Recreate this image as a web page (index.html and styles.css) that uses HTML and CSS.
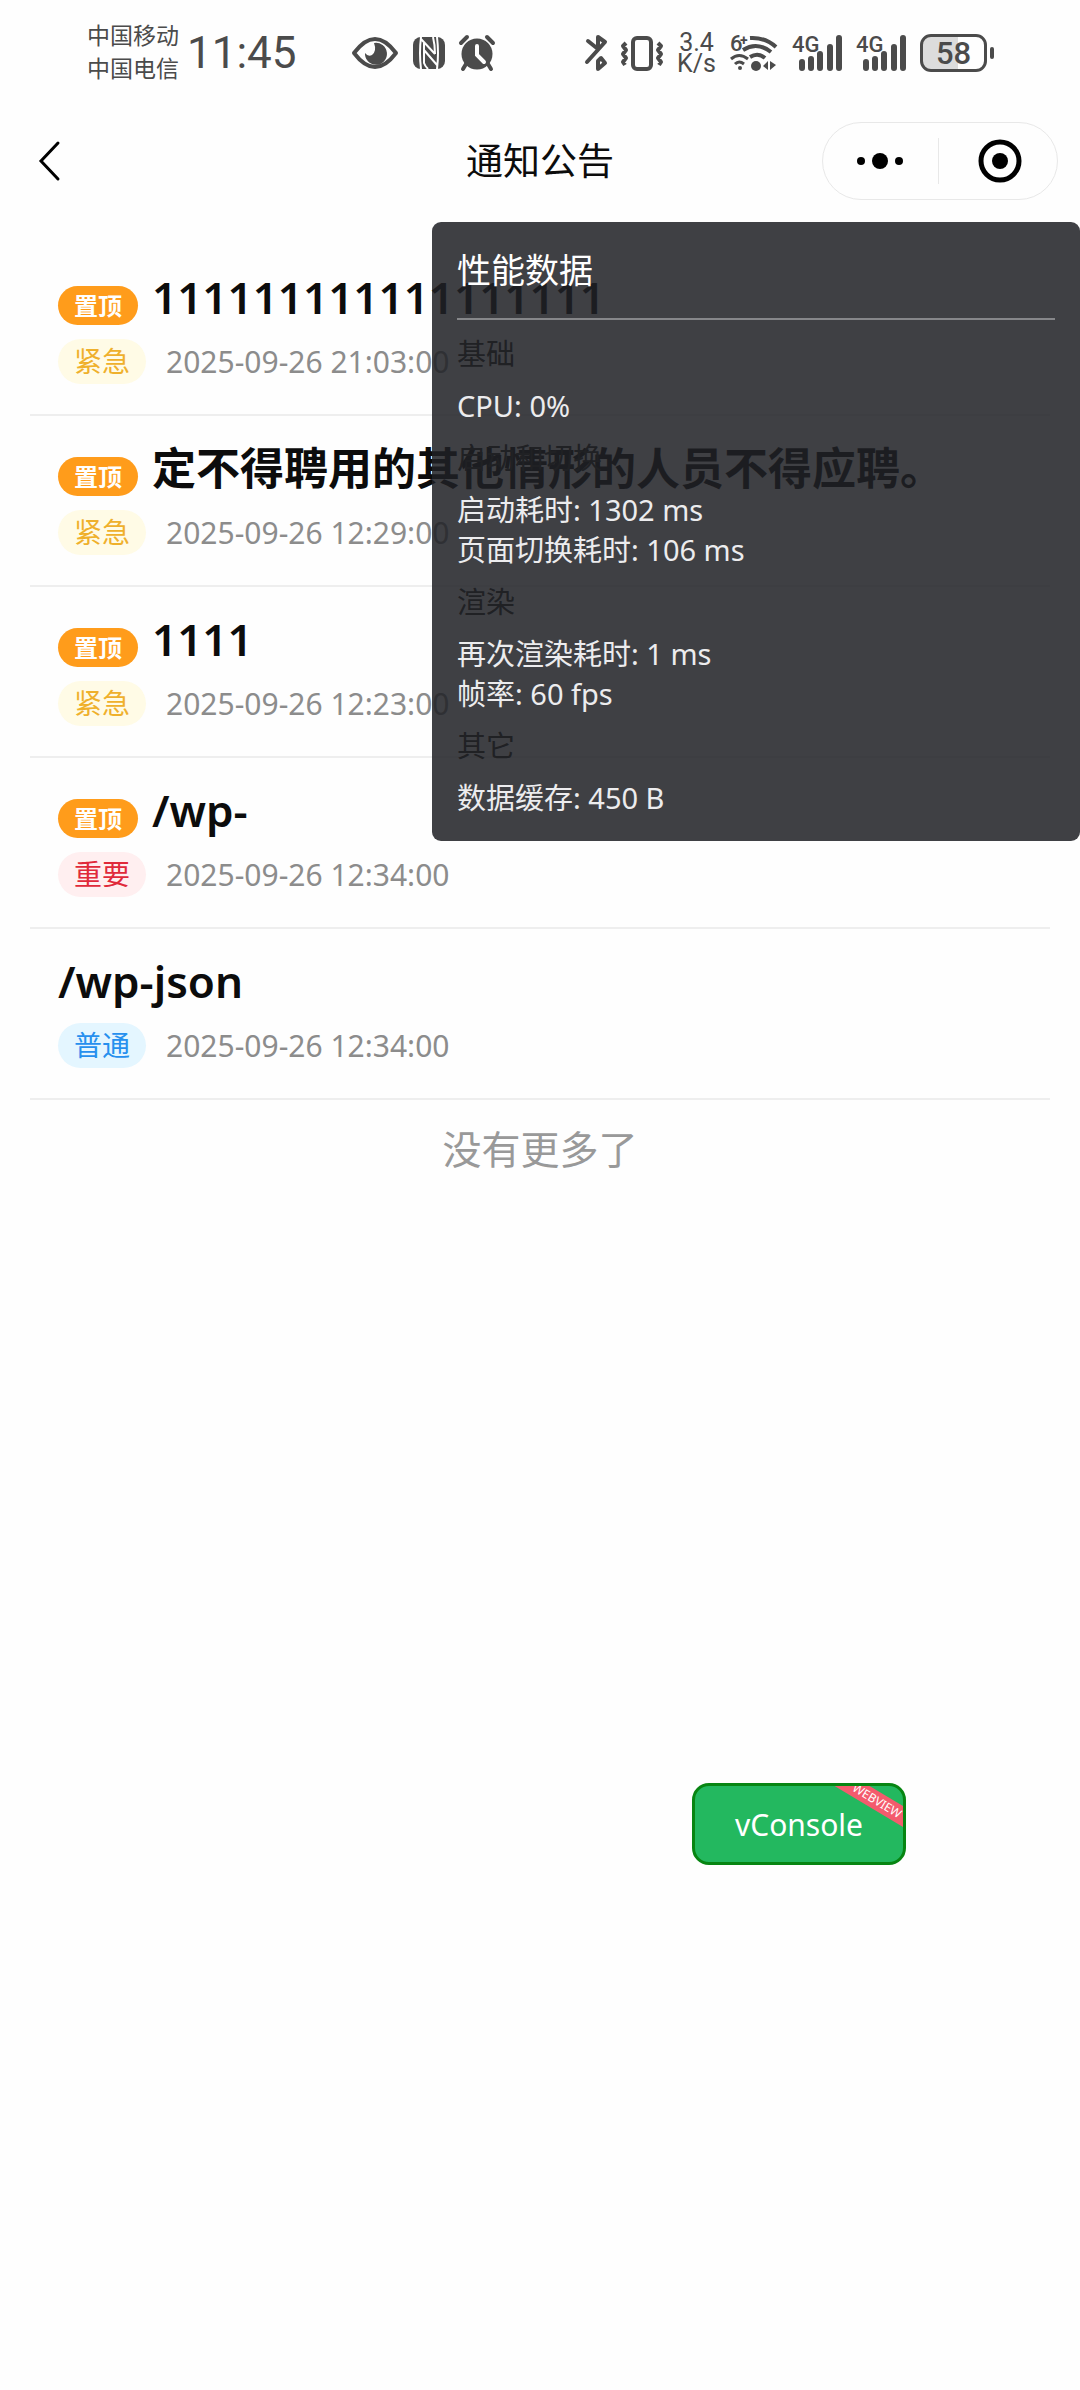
FILE: index.html
```html
<!DOCTYPE html>
<html lang="zh-CN">
<head>
<meta charset="utf-8">
<meta name="viewport" content="width=device-width, initial-scale=1">
<title>通知公告</title>
<link rel="stylesheet" href="styles.css">
</head>
<body>
<header class="status">
  <div class="carriers"><span>中国移动</span><span>中国电信</span></div>
  <time class="clock">11:45</time>
  <div class="status-left">
    <svg width="48" height="36" viewBox="0 0 48 36"><path d="M3 18Q24-10 45 18Q24 46 3 18Z" fill="none" stroke="#4b4b4b" stroke-width="4" stroke-linejoin="round"/><path d="M23 8A11 11 0 1 1 14 18Q17 22 21 20Q26 16 23 8Z" fill="#4b4b4b"/></svg>
    <svg width="32" height="32" viewBox="0 0 32 32"><rect width="32" height="32" rx="8" fill="#4b4b4b"/><path d="M8 0Q6 16 8 32M8 2L22 17M11 6V26Q12 29 15 32M11 13L24 28M24 32Q26 16 24 0M22 17Q22 8 20 0" fill="none" stroke="#fefefe" stroke-width="2"/></svg>
    <svg width="36" height="36" viewBox="0 0 36 36"><circle cx="18" cy="19" r="15.500" fill="#4b4b4b"/><path d="M2 8L8 2M34 8L28 2M7 29L4 34M29 29L32 34" stroke="#4b4b4b" stroke-width="4" stroke-linecap="round"/><path d="M18 11V20L25 27" fill="none" stroke="#fefefe" stroke-width="4" stroke-linecap="round"/></svg>
  </div>
  <div class="status-right">
    <svg width="22" height="38" viewBox="0 0 22 38"><path d="M3 7L13 15V3L20 8 2 28M13 27V35L20 29 16 24Z" fill="none" stroke="#4b4b4b" stroke-width="4" stroke-linecap="round" stroke-linejoin="round"/></svg>
    <svg width="42" height="38" viewBox="0 0 42 38"><rect x="12" y="4" width="18" height="31" rx="4" fill="none" stroke="#4b4b4b" stroke-width="4"/><path d="M5 9L2 12 5 16 2 20 5 24 2 28 4 31M37 9L40 12 37 16 40 20 37 24 40 28 38 31" fill="none" stroke="#4b4b4b" stroke-width="4" stroke-linejoin="round"/></svg>
    <div class="speed"><span>3.4</span><span>K/s</span></div>
    <svg width="48" height="38" viewBox="0 0 48 38"><g fill="none" stroke="#4b4b4b" stroke-width="4"><path d="M20 4Q35 3 46 13M13 16Q27 7 41 18M20 23Q28 18 35 24"/><path d="M1 25Q9 18 18 25M5 30Q9 26 14 30" stroke-width="3"/></g><circle cx="10" cy="34" r="2" fill="#4b4b4b"/><circle cx="26" cy="32" r="5" fill="#4b4b4b"/><path d="M38 27V36L33 32ZM40 27V36L46 31Z" fill="#4b4b4b"/><text x="0" y="17" class="tiny">6</text><text x="10" y="11" class="plus">+</text></svg>
    <svg width="50" height="38" viewBox="0 0 50 38"><text x="0" y="18" class="tiny">4G</text><path d="M10 28V34M19 25V34M28 20V34M38 13V34M47 4V34" stroke="#4b4b4b" stroke-width="6" stroke-linecap="round"/></svg>
    <svg width="50" height="38" viewBox="0 0 50 38"><text x="0" y="18" class="tiny">4G</text><path d="M10 28V34M19 25V34M28 20V34M38 13V34M47 4V34" stroke="#4b4b4b" stroke-width="6" stroke-linecap="round"/></svg>
    <div class="battery">58</div>
  </div>
</header>

<nav class="navbar">
  <button class="back" aria-label="返回"><svg width="24" height="40" viewBox="0 0 24 40"><path d="M20 2L3 20 20 38" fill="none" stroke="#000" stroke-width="3" stroke-linecap="round"/></svg></button>
  <h1>通知公告</h1>
  <div class="capsule">
    <button aria-label="更多"><svg width="46" height="18" viewBox="0 0 46 18"><circle cx="4" cy="9" r="4"/><circle cx="23" cy="9" r="8"/><circle cx="42" cy="9" r="4"/></svg></button>
    <button aria-label="关闭"><svg width="44" height="44" viewBox="0 0 44 44"><circle cx="22" cy="22" r="19" fill="none" stroke="#000" stroke-width="5"/><circle cx="22" cy="22" r="8"/></svg></button>
  </div>
</nav>

<main>
  <ul class="notices">
    <li><h2><span class="pin">置顶</span>111111111111111111</h2><p><span class="level urgent">紧急</span><time>2025-09-26 21:03:00</time></p></li>
    <li><h2><span class="pin">置顶</span>定不得聘用的其他情形的人员不得应聘。</h2><p><span class="level urgent">紧急</span><time>2025-09-26 12:29:00</time></p></li>
    <li><h2><span class="pin">置顶</span>1111</h2><p><span class="level urgent">紧急</span><time>2025-09-26 12:23:00</time></p></li>
    <li><h2><span class="pin">置顶</span>/wp-</h2><p><span class="level major">重要</span><time>2025-09-26 12:34:00</time></p></li>
    <li><h2>/wp-json</h2><p><span class="level normal">普通</span><time>2025-09-26 12:34:00</time></p></li>
  </ul>
  <p class="end">没有更多了</p>
</main>

<aside class="perf">
  <h2>性能数据</h2>
  <h3>基础</h3>
  <p>CPU: 0%</p>
  <h3>启动和切换</h3>
  <p>启动耗时: 1302 ms</p>
  <p>页面切换耗时: 106 ms</p>
  <h3>渲染</h3>
  <p>再次渲染耗时: 1 ms</p>
  <p>帧率: 60 fps</p>
  <h3>其它</h3>
  <p>数据缓存: 450 B</p>
</aside>

<button class="vconsole">vConsole<span class="ribbon">WEBVIEW</span></button>
</body>
</html>
```
FILE: styles.css
```css
* { box-sizing: border-box; margin: 0; padding: 0; }
body {
  position: relative;
  min-height: 100vh;
  background: #fefefe;
  color: #0c0c0c;
  font-family: "Noto Sans", "Noto Sans CJK SC", sans-serif;
}
button { border: 0; background: none; font: inherit; }
svg { display: block; flex: none; overflow: visible; }

.status {
  display: flex;
  align-items: center;
  height: 105px;
  padding: 0 93px 0 87px;
  color: #4b4b4b;
  font-family: Roboto, "Noto Sans CJK SC", sans-serif;
}
.carriers { display: grid; font-size: 23px; line-height: 33px; }
.clock { margin-left: 8px; font-size: 44px; line-height: 52px; }
.status-left { display: flex; align-items: center; gap: 14px; margin-left: 54px; }
.status-right { display: flex; align-items: center; gap: 14px; margin-left: auto; }
.speed { display: grid; font-size: 25px; line-height: 21px; text-align: center; }
.tiny { font-size: 22px; font-weight: 500; fill: #4b4b4b; }
.plus { font-size: 14px; font-weight: 700; fill: #4b4b4b; }
.battery {
  position: relative;
  width: 67px;
  height: 38px;
  border: 3px solid #4b4b4b;
  border-radius: 11px;
  background: linear-gradient(90deg, #dcdcdc 58%, #fefefe 58%);
  font-size: 31px;
  font-weight: 500;
  line-height: 33px;
  text-align: center;
}
.battery::after {
  content: "";
  position: absolute;
  left: 67px;
  top: 10px;
  width: 4px;
  height: 12px;
  border-radius: 2px;
  background: #4b4b4b;
}

.navbar {
  display: grid;
  grid-template-columns: 1fr auto 1fr;
  align-items: center;
  height: 111px;
  padding: 0 22px;
}
.back { justify-self: start; padding: 0 16px; }
.navbar h1 { font-size: 37px; font-weight: 400; line-height: 48px; }
.capsule {
  display: flex;
  justify-self: end;
  align-items: center;
  width: 236px;
  height: 78px;
  border: 1px solid #e8e8e8;
  border-radius: 39px;
}
.capsule button { display: grid; place-items: center; flex: 1; height: 46px; }
.capsule button + button { padding-left: 4px; border-left: 1px solid #e8e8e8; }

.notices { padding: 29px 30px 0; list-style: none; }
.notices li { height: 171px; padding: 22px 28px 0; border-bottom: 2px solid #eee; }
.notices h2 { display: flex; align-items: center; gap: 14px; font-size: 44px; font-weight: 600; line-height: 60px; white-space: nowrap; }
.notices p { display: flex; align-items: center; gap: 20px; margin-top: 12px; }
.notices time { color: #8c8c8c; font-size: 30px; line-height: 40px; }
.pin {
  margin-top: 16px;
  padding: 0 16px;
  border-radius: 20px;
  background: #ff9c1b;
  color: #fff;
  font-size: 24px;
  font-weight: 600;
  line-height: 39px;
}
.level { padding: 0 16px; border-radius: 23px; font-size: 28px; line-height: 45px; }
.urgent { background: #fffbe6; color: #efb02c; }
.major { background: #ffeff0; color: #e02a3a; }
.normal { background: #e4f6ff; color: #2690ee; }
.end { padding-top: 21px; color: #999; font-size: 39px; line-height: 56px; text-align: center; }

.perf {
  position: absolute;
  top: 222px;
  right: 0;
  width: 60%;
  padding: 16px 25px 23px;
  border-radius: 9px;
  background: rgba(32, 33, 37, .86);
  color: #ececee;
  font-size: 29px;
  line-height: 40px;
}
.perf h2 { margin-bottom: 14px; padding-bottom: 16px; border-bottom: 2px solid #86878a; color: #fff; font-size: 34px; font-weight: 400; line-height: 64px; }
.perf h3 { color: #202124; font-size: 29px; font-weight: 400; margin: 12px 0; }

.vconsole {
  position: absolute;
  right: 174px;
  bottom: 525px;
  width: 214px;
  height: 82px;
  border: 3px solid #078512;
  border-radius: 17px;
  background: #23b85f;
  color: #fff;
  font-size: 30px;
  overflow: hidden;
}
.ribbon {
  position: absolute;
  top: 6px;
  right: -34px;
  width: 120px;
  background: #f45b6d;
  font-size: 12px;
  line-height: 18px;
  transform: rotate(31deg);
}
```
